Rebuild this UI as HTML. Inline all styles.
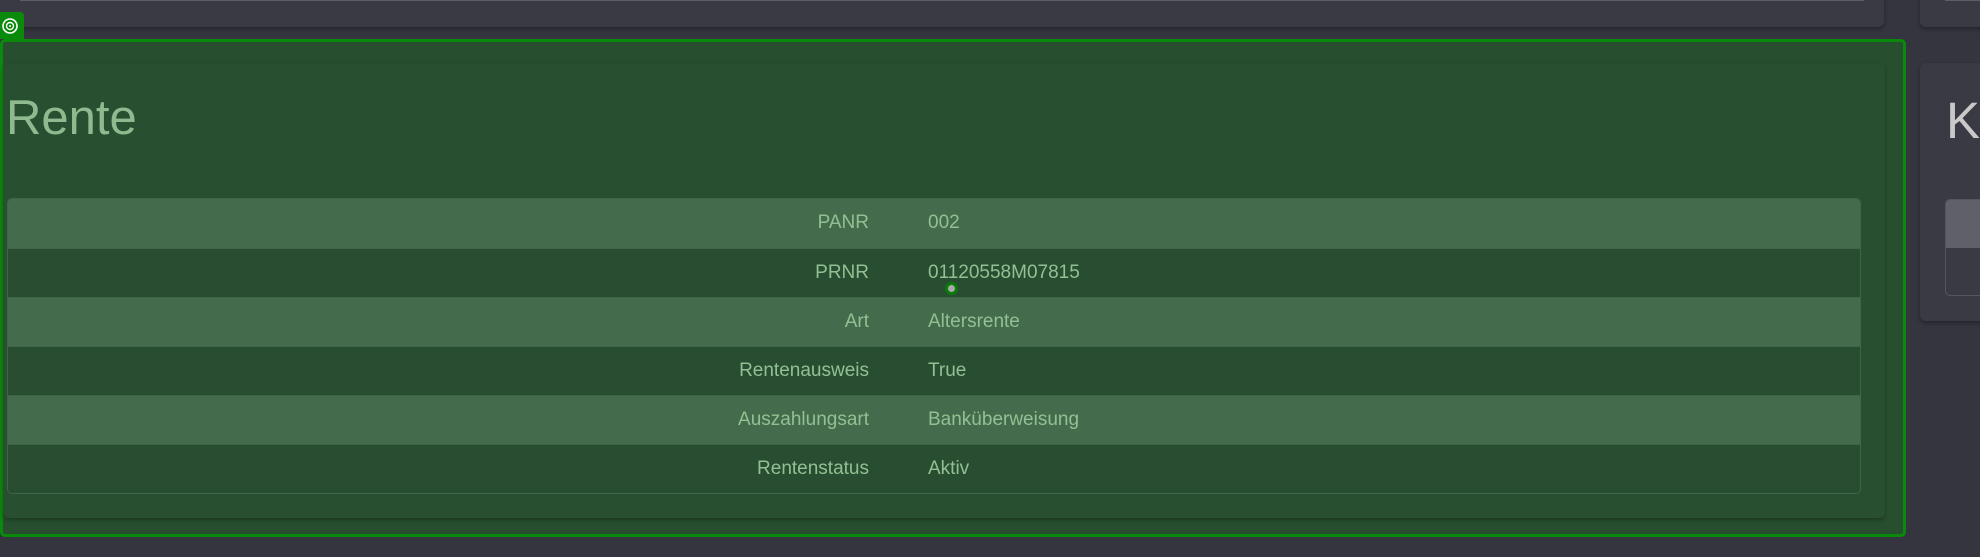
<!DOCTYPE html>
<html><head><meta charset="utf-8"><style>
*{margin:0;padding:0;box-sizing:border-box}
body{width:1980px;height:557px;background:#35353f;position:relative;overflow:hidden;font-family:"Liberation Sans",sans-serif}
.card{position:absolute;background:#3a3a45;border-radius:6px;box-shadow:0 2px 4px rgba(0,0,0,.35)}
.strip{position:absolute;height:3px;background:#5e5e66}
.green{position:absolute;left:0;top:39px;width:1906px;height:498px;border:3px solid #0a8a0a;border-radius:5px;background:#274f2f}
.inner{position:absolute;left:0;top:22px;width:1882px;height:454px;background:#284f30;border-radius:5px;box-shadow:0 2px 4px rgba(0,0,0,.3)}
h1{position:absolute;left:3px;top:48px;font-weight:normal;font-size:49px;color:#8fba8f}
.tw{position:absolute;left:4px;top:156px;width:1854px;border:1px solid #3f6646;border-radius:5px;overflow:hidden}
table{width:100%;border-collapse:collapse}
td{height:49px;font-size:19px;color:#92c092;border-top:1px solid #3f6646}
tr:first-child td{border-top:none}
tr:nth-child(odd) td{background:#446b4b}
tr:nth-child(even) td{background:#284d31}
td.l{width:861px;text-align:right}
td.v{padding-left:59px}
</style></head><body>
<div class="card" style="left:0;top:-10px;width:1884px;height:37px"><div class="strip" style="left:20px;right:20px;top:8px"></div></div>
<div class="card" style="left:1920px;top:-10px;width:80px;height:37px"><div class="strip" style="left:25px;right:0;top:8px"></div></div>
<div class="card" style="left:1920px;top:63px;width:80px;height:258px">
<div style="position:absolute;left:26px;top:28px;font-size:51px;color:#c9c9c9">Ko</div>
<div style="position:absolute;left:25px;top:136px;width:80px;height:97px;border:1px solid #55555e;border-radius:5px;overflow:hidden"><div style="height:48px;background:#606068"></div></div>
</div>
<div class="green"><div class="inner"></div>
<h1>Rente</h1>
<div class="tw"><table>
<tr><td class="l">PANR</td><td class="v">002</td></tr>
<tr><td class="l">PRNR</td><td class="v">01120558M07815</td></tr>
<tr><td class="l">Art</td><td class="v">Altersrente</td></tr>
<tr><td class="l">Rentenausweis</td><td class="v">True</td></tr>
<tr><td class="l">Auszahlungsart</td><td class="v">Banküberweisung</td></tr>
<tr><td class="l">Rentenstatus</td><td class="v">Aktiv</td></tr>
</table></div>
</div>
<div style="position:absolute;left:0;top:12px;width:24px;height:27px;background:#0a8a0a;border-radius:0 4px 0 0">
<svg width="24" height="24" viewBox="0 0 24 24" style="position:absolute;left:-1px;top:1px"><circle cx="11" cy="13" r="7" fill="none" stroke="#fff" stroke-width="1.6"/><circle cx="11" cy="13" r="3.5" fill="none" stroke="#fff" stroke-width="1.4"/><circle cx="11" cy="13" r="1" fill="#fff"/></svg></div>
<div style="position:absolute;left:945px;top:282px;width:13px;height:13px;border-radius:50%;border:3px solid #0a7a0a;background:#aaa"></div>
</body></html>
